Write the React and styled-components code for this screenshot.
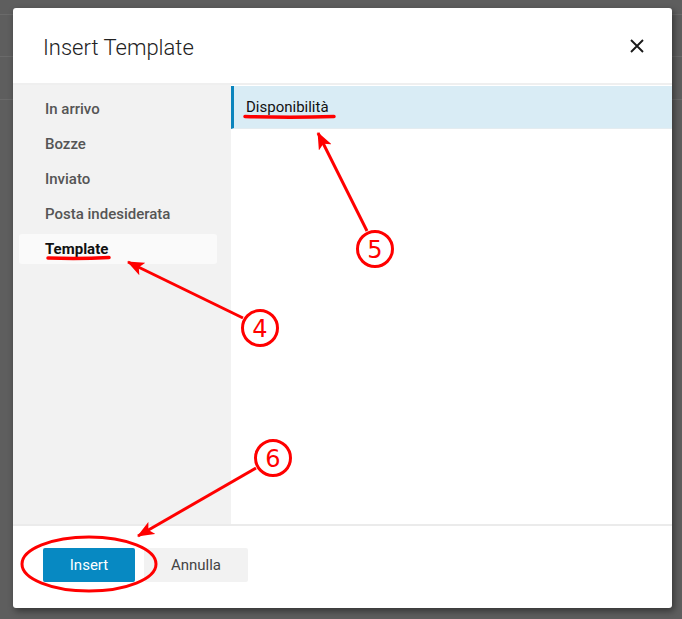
import React from 'react';
import styled, { createGlobalStyle } from 'styled-components';

const GlobalStyle = createGlobalStyle`
  html, body { margin: 0; padding: 0; }
  body {
    font-family: Roboto, "Liberation Sans", sans-serif;
    background: #5e5e5e;
  }
`;

const Backdrop = styled.div`
  position: relative;
  width: 682px;
  height: 619px;
  box-sizing: border-box;
  padding: 8px 10px 0 13px;
  overflow: hidden;
  background:
    linear-gradient(#6a6a6a, #6a6a6a) 0 14px / 100% 1px no-repeat,
    linear-gradient(#6a6a6a, #6a6a6a) 0 56px / 100% 1px no-repeat,
    linear-gradient(#6a6a6a, #6a6a6a) 0 99px / 100% 1px no-repeat,
    #5e5e5e;
`;

const Modal = styled.div`
  width: 659px;
  height: 600px;
  background: #fff;
  border-radius: 3px;
  box-shadow: 2px 3px 7px rgba(0, 0, 0, 0.45);
  display: flex;
  flex-direction: column;
  overflow: hidden;
`;

const Header = styled.div`
  height: 75px;
  flex: none;
  display: flex;
  align-items: center;
  justify-content: space-between;
  padding: 0 27px 0 30px;
  border-bottom: 2px solid #efefef;
`;

const Title = styled.h2`
  margin: 3px 0 0;
  font-size: 22px;
  font-weight: 300;
  color: #222;
`;

const CloseButton = styled.button`
  border: 0;
  background: none;
  padding: 0;
  width: 16px;
  height: 16px;
  display: flex;
  align-items: center;
  justify-content: center;
  cursor: pointer;
`;

const Body = styled.div`
  flex: 1;
  display: flex;
  min-height: 0;
`;

const Sidebar = styled.nav`
  width: 218px;
  flex: none;
  background: #f2f2f2;
  box-sizing: border-box;
  padding: 9px 14px 0 6px;
  display: flex;
  flex-direction: column;
  gap: 5px;
`;

const FolderItem = styled.div`
  height: 30px;
  display: flex;
  align-items: center;
  padding-left: 26px;
  border-radius: 3px;
  font-size: 15px;
  font-weight: ${({ active }) => (active ? 700 : 500)};
  color: ${({ active }) => (active ? '#111' : '#555')};
  background: ${({ active }) => (active ? '#fafafa' : 'transparent')};
`;

const TemplateList = styled.div`
  flex: 1;
  padding-top: 1px;
  background: #fff;
`;

const TemplateRow = styled.div`
  height: 42px;
  display: flex;
  align-items: center;
  padding-left: 12px;
  font-size: 15px;
  color: #111;
  background: ${({ selected }) => (selected ? '#d9ecf5' : '#fff')};
  border-left: 3px solid ${({ selected }) => (selected ? '#0a84bd' : 'transparent')};
  border-bottom: 1px solid #e4ecf0;
`;

const Footer = styled.div`
  flex: none;
  border-top: 2px solid #ebebeb;
  padding: 22px 30px 26px;
  display: flex;
  gap: 9px;
`;

const Button = styled.button`
  height: 34px;
  border: 0;
  border-radius: 2px;
  font-family: Roboto, "Liberation Sans", sans-serif;
  font-size: 15px;
  width: ${({ primary }) => (primary ? '92px' : '104px')};
  background: ${({ primary }) => (primary ? '#0789c2' : '#f2f2f2')};
  color: ${({ primary }) => (primary ? '#fff' : '#444')};
  cursor: pointer;
`;

const Annotations = styled.svg`
  position: absolute;
  left: 0;
  top: 0;
  width: 682px;
  height: 619px;
  pointer-events: none;
`;

const Num = styled.text`
  font-family: "DejaVu Sans", sans-serif;
  font-size: 24px;
  fill: #f00;
`;

const folders = ['In arrivo', 'Bozze', 'Inviato', 'Posta indesiderata', 'Template'];

const callouts = [
  { n: '4', cx: 260, cy: 328, from: [243, 318], to: [128, 262] },
  { n: '5', cx: 375, cy: 249, from: [367, 231], to: [318, 133] },
  { n: '6', cx: 273, cy: 458, from: [256, 468], to: [138, 536] },
];

const App = () => {
  return (
    <Backdrop>
      <GlobalStyle />
      <Modal>
        <Header>
          <Title>Insert Template</Title>
          <CloseButton aria-label="close">
            <svg width="14" height="14" viewBox="0 0 14 14">
              <path d="M1 1 L13 13 M13 1 L1 13" stroke="#1a1a1a" strokeWidth="1.9" />
            </svg>
          </CloseButton>
        </Header>
        <Body>
          <Sidebar>
            {folders.map((f) => (
              <FolderItem key={f} active={f === 'Template'}>{f}</FolderItem>
            ))}
          </Sidebar>
          <TemplateList>
            <TemplateRow selected>Disponibilità</TemplateRow>
          </TemplateList>
        </Body>
        <Footer>
          <Button primary>Insert</Button>
          <Button>Annulla</Button>
        </Footer>
      </Modal>

      <Annotations viewBox="0 0 682 619">
        <defs>
          <marker id="head" markerUnits="userSpaceOnUse" markerWidth="18" markerHeight="14"
            refX="16" refY="7" orient="auto">
            <path d="M0 0 L17 7 L0 14 L4 7 Z" fill="#f00" />
          </marker>
        </defs>
        <path d="M245 116.5 Q290 118 334 116.5" stroke="#f00" strokeWidth="3.5" fill="none" strokeLinecap="round" />
        <path d="M48 258 Q80 259 109 257.5" stroke="#f00" strokeWidth="3.5" fill="none" strokeLinecap="round" />
        <ellipse cx="89" cy="564" rx="67" ry="27" stroke="#f00" strokeWidth="3" fill="none" />
        {callouts.map((c) => (
          <g key={c.n}>
            <line x1={c.from[0]} y1={c.from[1]} x2={c.to[0]} y2={c.to[1]}
              stroke="#f00" strokeWidth="3" markerEnd="url(#head)" />
            <circle cx={c.cx} cy={c.cy} r="17.5" stroke="#f00" strokeWidth="3" fill="#fff" />
            <Num x={c.cx} y={c.cy + 9} textAnchor="middle">{c.n}</Num>
          </g>
        ))}
      </Annotations>
    </Backdrop>
  );
};

export default App;
